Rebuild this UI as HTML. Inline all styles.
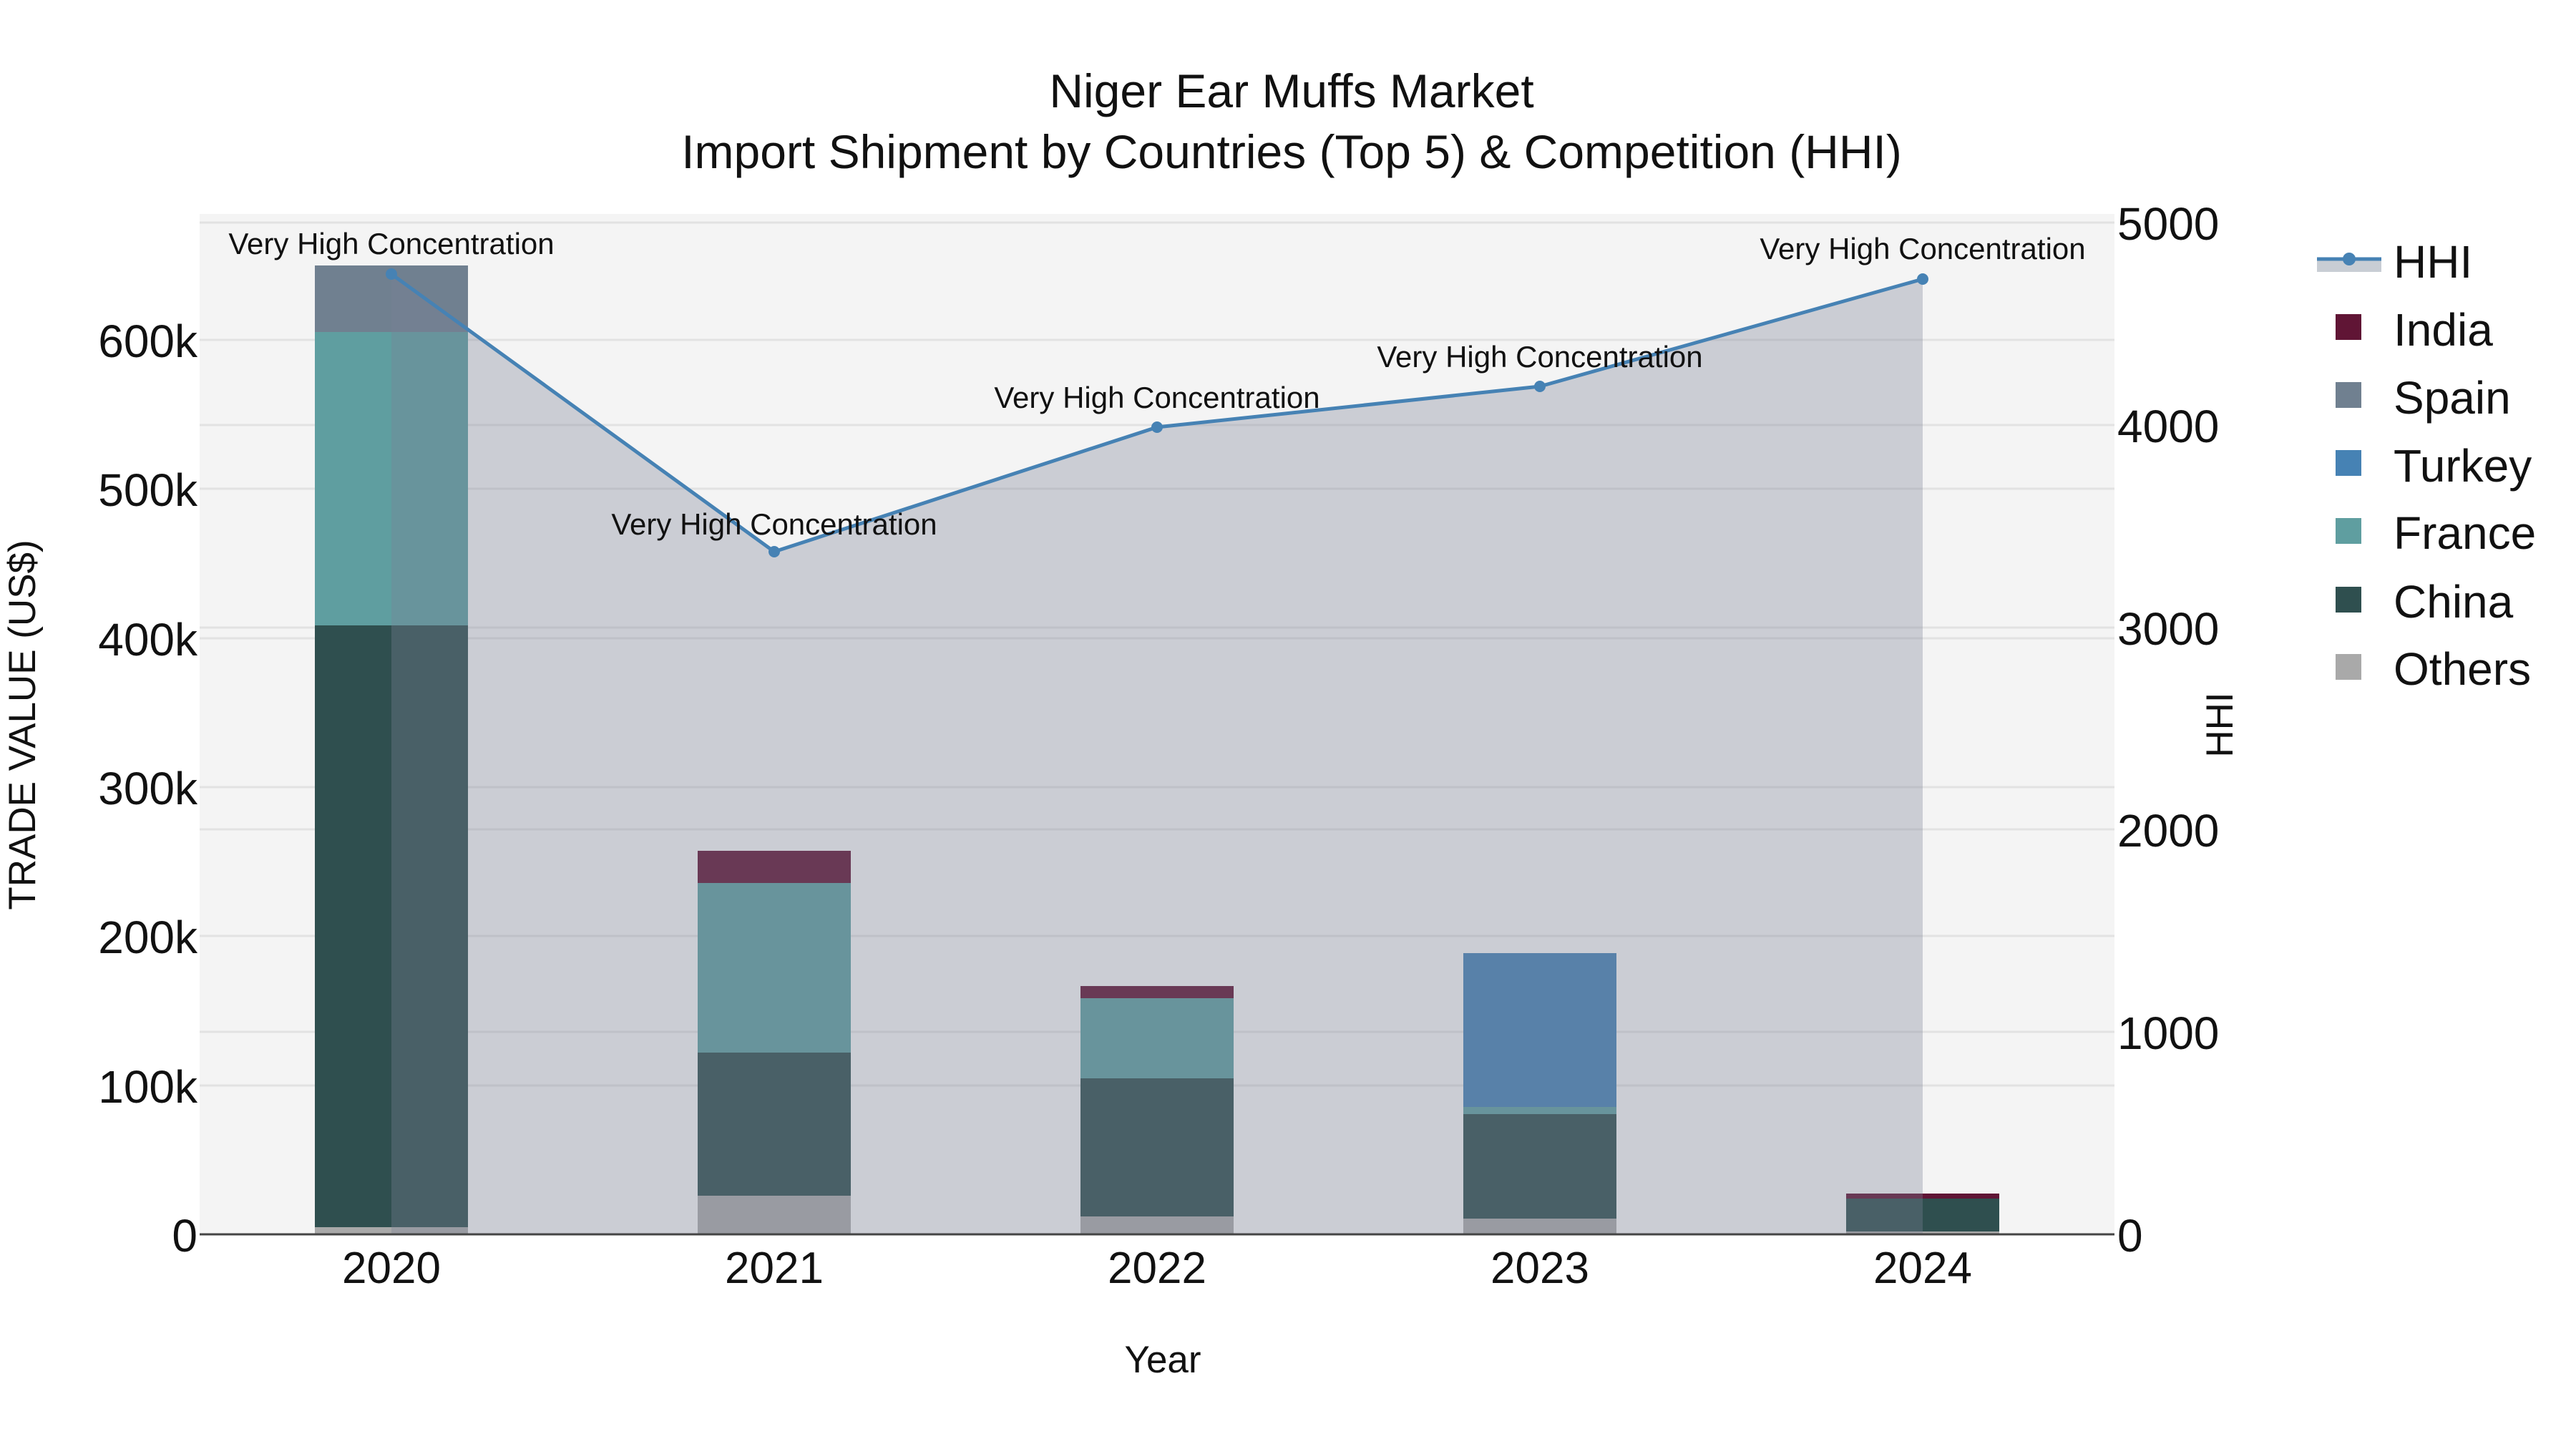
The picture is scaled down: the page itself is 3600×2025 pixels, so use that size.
<!DOCTYPE html>
<html><head><meta charset="utf-8"><style>
html,body{margin:0;padding:0;background:#fff;}
svg{display:block;font-family:"Liberation Sans",sans-serif;}
</style></head><body>
<svg width="3600" height="2025" viewBox="0 0 3600 2025" xmlns="http://www.w3.org/2000/svg">
<rect width="3600" height="2025" fill="#fff"/>
<rect x="279" y="299" width="2676" height="1426" fill="#f4f4f4"/>
<g stroke="#e2e2e2" stroke-width="3">
<line x1="279" x2="2955" y1="1517" y2="1517"/>
<line x1="279" x2="2955" y1="1308" y2="1308"/>
<line x1="279" x2="2955" y1="1100" y2="1100"/>
<line x1="279" x2="2955" y1="892" y2="892"/>
<line x1="279" x2="2955" y1="683" y2="683"/>
<line x1="279" x2="2955" y1="475" y2="475"/>
<line x1="279" x2="2955" y1="1442" y2="1442"/>
<line x1="279" x2="2955" y1="1159" y2="1159"/>
<line x1="279" x2="2955" y1="877" y2="877"/>
<line x1="279" x2="2955" y1="594" y2="594"/>
<line x1="279" x2="2955" y1="311" y2="311"/>
</g>
<g>
<rect x="440" y="1715" width="214" height="10" fill="#a9a9a9"/>
<rect x="440" y="874" width="214" height="841" fill="#2f4f4f"/>
<rect x="440" y="464" width="214" height="410" fill="#5f9ea0"/>
<rect x="440" y="371" width="214" height="93" fill="#708090"/>

<rect x="975" y="1671" width="214" height="54" fill="#a9a9a9"/>
<rect x="975" y="1471" width="214" height="200" fill="#2f4f4f"/>
<rect x="975" y="1234" width="214" height="237" fill="#5f9ea0"/>
<rect x="975" y="1189" width="214" height="45" fill="#601535"/>

<rect x="1510" y="1700" width="214" height="25" fill="#a9a9a9"/>
<rect x="1510" y="1507" width="214" height="193" fill="#2f4f4f"/>
<rect x="1510" y="1395" width="214" height="112" fill="#5f9ea0"/>
<rect x="1510" y="1378" width="214" height="17" fill="#601535"/>

<rect x="2045" y="1703" width="214" height="22" fill="#a9a9a9"/>
<rect x="2045" y="1557" width="214" height="146" fill="#2f4f4f"/>
<rect x="2045" y="1547" width="214" height="10" fill="#5f9ea0"/>
<rect x="2045" y="1332" width="214" height="215" fill="#4682b4"/>

<rect x="2580" y="1721" width="214" height="4" fill="#a9a9a9"/>
<rect x="2580" y="1675" width="214" height="46" fill="#2f4f4f"/>
<rect x="2580" y="1668" width="214" height="7" fill="#601535"/>
</g>
<polygon points="547,383 1082,771 1617,597 2152,540 2687,390 2687,1725 547,1725" fill="rgb(123,129,149)" fill-opacity="0.34"/>
<line x1="279" x2="2955" y1="1725" y2="1725" stroke="#444" stroke-width="3"/>
<polyline points="547,383 1082,771 1617,597 2152,540 2687,390" fill="none" stroke="#4682b4" stroke-width="5"/>
<g fill="#4682b4">
<circle cx="547" cy="383" r="8"/><circle cx="1082" cy="771" r="8"/><circle cx="1617" cy="597" r="8"/><circle cx="2152" cy="540" r="8"/><circle cx="2687" cy="390" r="8"/>
</g>
<g font-size="42" fill="#111" text-anchor="middle">
<text x="547" y="355">Very High Concentration</text>
<text x="1082" y="747">Very High Concentration</text>
<text x="1617" y="570">Very High Concentration</text>
<text x="2152" y="513">Very High Concentration</text>
<text x="2687" y="362">Very High Concentration</text>
</g>
<g fill="#111" text-anchor="middle" font-size="66">
<text x="1805" y="150">Niger Ear Muffs Market</text>
<text x="1805" y="235">Import Shipment by Countries (Top 5) &amp; Competition (HHI)</text>
</g>
<g fill="#111" font-size="64" text-anchor="end">
<text x="276" y="1749">0</text>
<text x="276" y="1541">100k</text>
<text x="276" y="1332">200k</text>
<text x="276" y="1124">300k</text>
<text x="276" y="916">400k</text>
<text x="276" y="707">500k</text>
<text x="276" y="499">600k</text>
</g>
<g fill="#111" font-size="64">
<text x="2959" y="1749">0</text>
<text x="2959" y="1466">1000</text>
<text x="2959" y="1183">2000</text>
<text x="2959" y="901">3000</text>
<text x="2959" y="618">4000</text>
<text x="2959" y="335">5000</text>
</g>
<g fill="#111" font-size="62" text-anchor="middle">
<text x="547" y="1793">2020</text>
<text x="1082" y="1793">2021</text>
<text x="1617" y="1793">2022</text>
<text x="2152" y="1793">2023</text>
<text x="2687" y="1793">2024</text>
</g>
<text x="1625" y="1918" font-size="53" fill="#111" text-anchor="middle">Year</text>
<text transform="translate(49,1013) rotate(-90)" font-size="53" fill="#111" text-anchor="middle">TRADE VALUE (US$)</text>
<text transform="translate(3120,1013) rotate(-90)" font-size="53" fill="#111" text-anchor="middle">HHI</text>
<rect x="3238" y="362" width="90" height="18" fill="#c8cdd4"/>
<line x1="3238" x2="3328" y1="362" y2="362" stroke="#4682b4" stroke-width="5"/>
<circle cx="3283" cy="362" r="9" fill="#4682b4"/>
<g>
<rect x="3264" y="439" width="36" height="36" fill="#601535"/>
<rect x="3264" y="534" width="36" height="36" fill="#708090"/>
<rect x="3264" y="629" width="36" height="36" fill="#4682b4"/>
<rect x="3264" y="724" width="36" height="36" fill="#5f9ea0"/>
<rect x="3264" y="820" width="36" height="36" fill="#2f4f4f"/>
<rect x="3264" y="914" width="36" height="36" fill="#a9a9a9"/>
</g>
<g fill="#111" font-size="64">
<text x="3345" y="388">HHI</text>
<text x="3345" y="483">India</text>
<text x="3345" y="578">Spain</text>
<text x="3345" y="673">Turkey</text>
<text x="3345" y="767">France</text>
<text x="3345" y="863">China</text>
<text x="3345" y="957">Others</text>
</g>
</svg>
</body></html>
